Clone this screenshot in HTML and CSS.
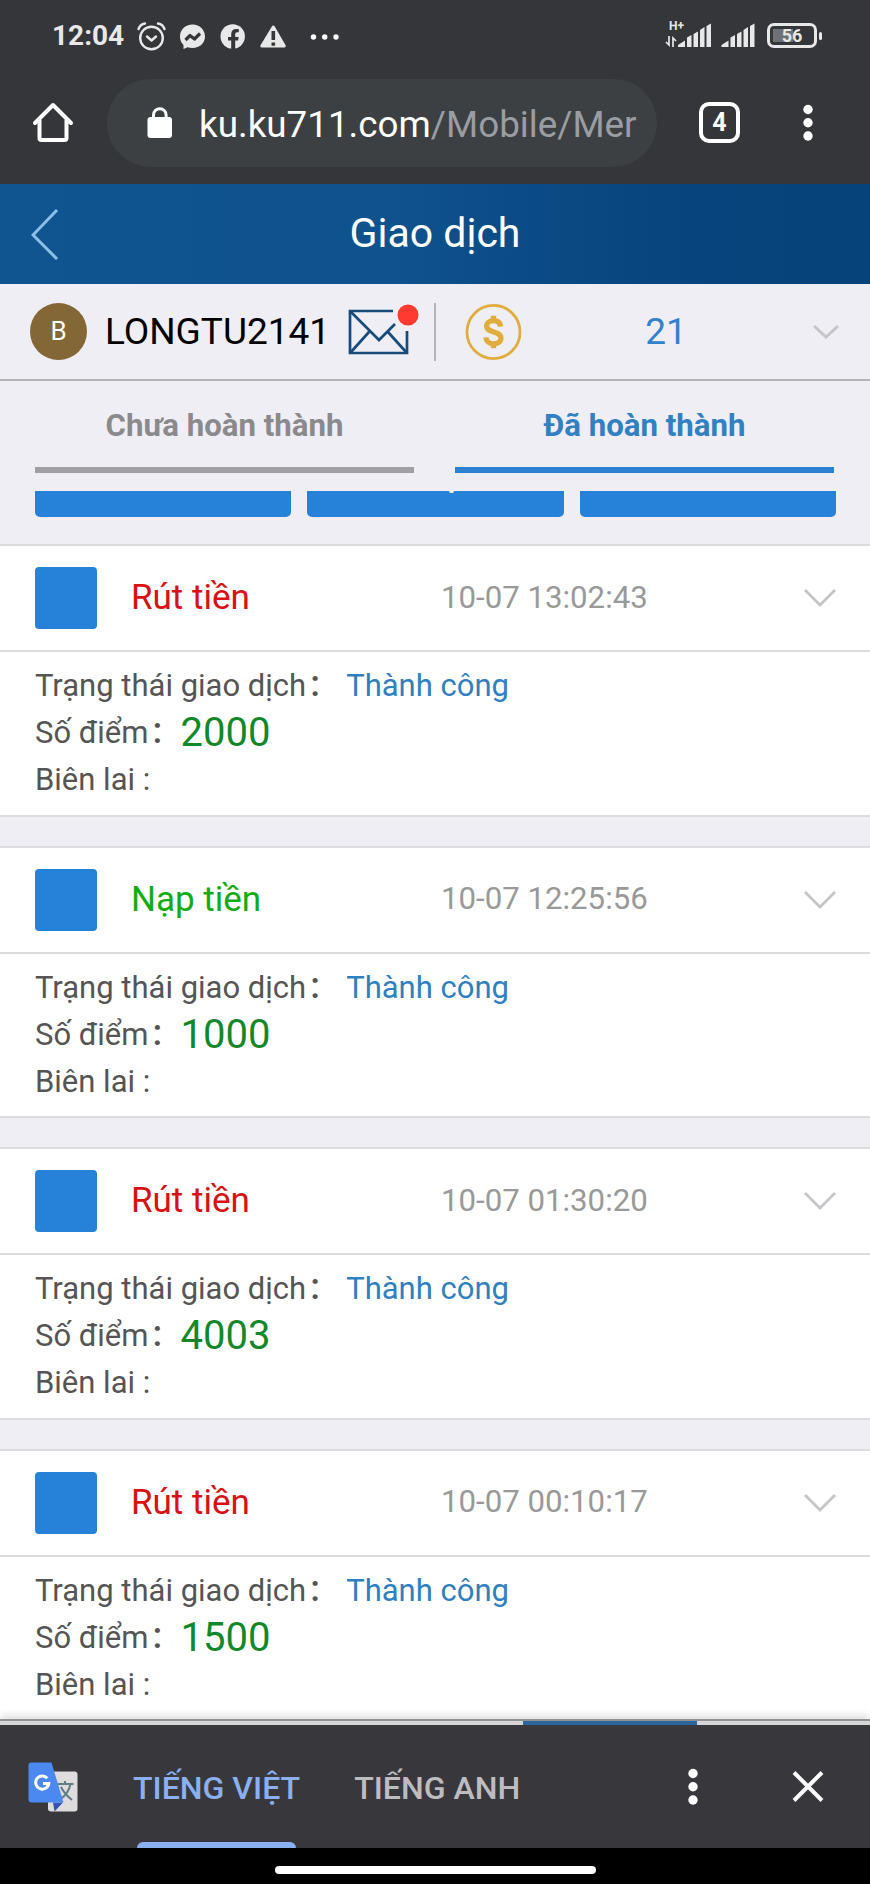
FILE: index.html
```
<!DOCTYPE html>
<html lang="vi">
<head>
  <meta charset="UTF-8">
  <meta name="viewport" content="width=device-width, initial-scale=1.0">
  <title>Giao dịch</title>
  <link rel="stylesheet" href="styles.css">
</head>
<body>
<div class="status-bar">
  <span class="clock">12:04</span>
  <svg class="status-icons" width="206" height="32" viewBox="0 0 206 32">
    <g fill="none" stroke="#e8e8e8" stroke-width="2.4" stroke-linecap="round" stroke-linejoin="round">
      <circle cx="15.500" cy="19" r="11.3"/>
      <path d="M11 17.500l4.500 4 4.500-4M2.500 10C3.500 7 6 5 9 4.500M28.500 10C27.500 7 25 5 22 4.500"/>
    </g>
    <path fill="#e8e8e8" d="M56.500 5.500c-7.300 0-12.500 5.200-12.500 12 0 3.700 1.300 6.300 3.500 8.500V30l4-1.700c1.500.5 3.200.7 5 .7 7.300 0 12.500-5 12.500-11.500s-5.200-12-12.500-12z"/>
    <path fill="none" stroke="#35363a" stroke-width="3.200" stroke-linejoin="round" d="M49.500 21l4.500-4.500 4.500 3.500 5.500-5.500"/>
    <circle cx="96.700" cy="17.500" r="12.200" fill="#e8e8e8"/>
    <path fill="#35363a" d="M95.200 30v-8.500H92V18h3.200v-2.800c0-3.500 2-5.300 5-5.300l2.600.2v3.200h-1.600c-1.500 0-2 .9-2 2V18h3.500l-.6 3.500h-2.900V30z"/>
    <path fill="#e8e8e8" stroke="#e8e8e8" stroke-width="3" stroke-linejoin="round" d="M137.300 8l11 19h-22.500z"/>
    <path fill="none" stroke="#35363a" stroke-width="3.600" d="M137.300 12v9M137.300 23.500v3.200"/>
    <g fill="#fff"><circle cx="177.500" cy="18" r="2.700"/><circle cx="188.700" cy="18" r="2.700"/><circle cx="200" cy="18" r="2.700"/></g>
  </svg>
  <div class="network">
    <span class="network-type">H+</span>
    <svg width="94" height="26" viewBox="0 0 94 26">
      <path fill="none" stroke="#e8e8e8" stroke-width="1.700" d="M4 14v9l-3-3M8 25v-9l3 3"/>
      <g fill="#e8e8e8">
        <path d="M13 25v-2l7-4.500V25zM22 25v-9.500l4.500-2.500v12zM28.500 25V12l4.500-2.500V25zM35 25V8l4.500-3v20zM41.500 25V4l4.500-2.500V25z"/>
        <path d="M56.500 25v-2l7-4.500V25zM65.500 25v-9.500l4.500-2.500v12zM72 25V12l4.500-2.500V25zM78.500 25V8l4.500-3v20zM85 25V4l4.500-2.500V25z"/>
      </g>
    </svg>
  </div>
  <div class="battery"><span class="battery-level"></span><span class="battery-text">56</span></div>
</div>

<div class="browser-bar">
  <svg class="home" width="42" height="42" viewBox="0 0 42 42" fill="none" stroke="#fff" stroke-width="4" stroke-linecap="round" stroke-linejoin="round">
    <path d="M3 21L21 3l18 18M7.500 18v18q0 2 2 2h23q2 0 2-2V18"/>
  </svg>
  <div class="address">
    <svg width="26" height="32" viewBox="0 0 26 32">
      <rect x="0.500" y="10" width="24.500" height="21" rx="3" fill="#fff"/>
      <path fill="none" stroke="#fff" stroke-width="3" d="M6.500 10.500V8a6.300 6.300 0 0 1 12.600 0v2.500"/>
    </svg>
    <span class="url">ku.ku711.com<span class="url-path">/Mobile/Mer</span></span>
  </div>
  <span class="tab-count">4</span>
  <svg class="menu-dots" width="12" height="38" viewBox="0 0 12 38" fill="#fff">
    <circle cx="6" cy="5.500" r="4.700"/><circle cx="6" cy="18.700" r="4.700"/><circle cx="6" cy="32" r="4.700"/>
  </svg>
</div>

<header class="page-header">
  <svg class="back" width="28" height="52" viewBox="0 0 28 52" fill="none" stroke="#8cbfe8" stroke-width="3">
    <path d="M26 2L2 27l24 24"/>
  </svg>
  <h1>Giao dịch</h1>
</header>

<div class="account">
  <span class="avatar">B</span>
  <span class="username">LONGTU2141</span>
  <svg class="mail" width="72" height="52" viewBox="0 0 72 52">
    <g fill="none" stroke="#164b7c" stroke-width="2.700">
      <path d="M46 8H3v42h57V28"/>
      <path d="M4 9l28 28 16-16M4 49l18-20M59 49L41 29"/>
    </g>
    <circle cx="61" cy="12" r="10.500" fill="#ff3a30"/>
  </svg>
  <svg class="coin" width="58" height="58" viewBox="0 0 58 58">
    <circle cx="29" cy="29" r="27" fill="none" stroke="#e0ac3c" stroke-width="2.800"/>
    <path fill="none" stroke="#e0ac3c" stroke-width="5.400" d="M36.200 23.500c-.5-4.500-3.200-6-7.200-6-4.300 0-7 2.300-7 5.500 0 7.500 14.500 4.500 14.500 12 0 4-3.300 6-7.500 6-4.500 0-7.500-2.500-7.700-6.500M29 12.500v5M29 40v5.500"/>
  </svg>
  <span class="points">21</span>
  <svg class="arrow" width="26" height="14" viewBox="0 0 26 14"><path d="M1 1l12 11L25 1"/></svg>
</div>

<nav class="tabs">
  <a class="tab">Chưa hoàn thành</a>
  <a class="tab active">Đã hoàn thành</a>
</nav>
<div class="filters">
  <span class="filter"></span>
  <span class="filter cut"></span>
  <span class="filter"></span>
</div>

<main class="list">
  <section class="card">
    <div class="card-head">
      <span class="square"></span>
      <span class="type withdraw">Rút tiền</span>
      <time>10-07 13:02:43</time>
      <svg class="chevron" width="32" height="18" viewBox="0 0 32 18"><path d="M1 1l15 15L31 1"/></svg>
    </div>
    <div class="card-body">
      <p>Trạng thái giao dịch<span class="colon">:</span><span class="state">Thành công</span></p>
      <p>Số điểm<span class="colon">:</span><span class="amount">2000</span></p>
      <p>Biên lai :</p>
    </div>
  </section>
  <section class="card">
    <div class="card-head">
      <span class="square"></span>
      <span class="type deposit">Nạp tiền</span>
      <time>10-07 12:25:56</time>
      <svg class="chevron" width="32" height="18" viewBox="0 0 32 18"><path d="M1 1l15 15L31 1"/></svg>
    </div>
    <div class="card-body">
      <p>Trạng thái giao dịch<span class="colon">:</span><span class="state">Thành công</span></p>
      <p>Số điểm<span class="colon">:</span><span class="amount">1000</span></p>
      <p>Biên lai :</p>
    </div>
  </section>
  <section class="card">
    <div class="card-head">
      <span class="square"></span>
      <span class="type withdraw">Rút tiền</span>
      <time>10-07 01:30:20</time>
      <svg class="chevron" width="32" height="18" viewBox="0 0 32 18"><path d="M1 1l15 15L31 1"/></svg>
    </div>
    <div class="card-body">
      <p>Trạng thái giao dịch<span class="colon">:</span><span class="state">Thành công</span></p>
      <p>Số điểm<span class="colon">:</span><span class="amount">4003</span></p>
      <p>Biên lai :</p>
    </div>
  </section>
  <section class="card">
    <div class="card-head">
      <span class="square"></span>
      <span class="type withdraw">Rút tiền</span>
      <time>10-07 00:10:17</time>
      <svg class="chevron" width="32" height="18" viewBox="0 0 32 18"><path d="M1 1l15 15L31 1"/></svg>
    </div>
    <div class="card-body">
      <p>Trạng thái giao dịch<span class="colon">:</span><span class="state">Thành công</span></p>
      <p>Số điểm<span class="colon">:</span><span class="amount">1500</span></p>
      <p>Biên lai :</p>
    </div>
  </section>
</main>

<div class="bottom-edge"><span></span></div>
<div class="translate-bar">
  <svg class="translate-icon" width="50" height="50" viewBox="0 0 50 50">
    <rect x="20" y="9.500" width="29.500" height="40" rx="3" fill="#dedcdd"/>
    <path fill="none" stroke="#607d86" stroke-width="2" d="M30 22h15.500M37 19v3M42.500 22c-1.500 7-5.500 12-10 15M33 25c2.500 5 6 9 11 13"/>
    <path fill="#3453b5" d="M25 40.500h10l-8.500 9z"/>
    <path fill="#4b88f0" d="M3.500.5h20L35.500 40.500h-32q-3 0-3-3v-34q0-3 3-3z"/>
    <path fill="none" stroke="#fff" stroke-width="3" d="M19.300 16.300a6.600 6.600 0 1 0 1.500 5.200H15"/>
  </svg>
  <span class="lang active">TIẾNG VIỆT</span>
  <span class="lang">TIẾNG ANH</span>
  <svg class="lang-menu" width="12" height="38" viewBox="0 0 12 38" fill="#fff">
    <circle cx="6" cy="5.500" r="4.700"/><circle cx="6" cy="18.700" r="4.700"/><circle cx="6" cy="32" r="4.700"/>
  </svg>
  <svg class="close" width="32" height="32" viewBox="0 0 32 32" fill="none" stroke="#fff" stroke-width="4"><path d="M2 1.500l28 28M30 1.500l-28 28"/></svg>
</div>
<div class="gesture-bar"><span></span></div>
</body>
</html>
```
FILE: styles.css
```
* {
  box-sizing: border-box;
}
body {
  margin: 0;
  width: 870px;
  height: 1884px;
  overflow: hidden;
  display: flex;
  flex-direction: column;
  font-family: Roboto, "Noto Sans", sans-serif;
  background: #efeef5;
  color: #555;
}
svg {
  display: block;
  flex: none;
}
span, time {
  white-space: nowrap;
}
.status-bar {
  height: 72px;
  flex: none;
  display: flex;
  align-items: center;
  padding: 0 47px 2px 52px;
  background: #35363a;
  color: #e8e8e8;
}
.clock {
  width: 84px;
  font-size: 28px;
  font-weight: 700;
}
.network {
  position: relative;
  margin-left: auto;
}
.network-type {
  position: absolute;
  left: 4px;
  top: -2px;
  font-size: 12px;
  line-height: 12px;
  font-weight: 700;
}
.battery {
  position: relative;
  width: 50px;
  height: 25px;
  margin: 0 6px 0 8px;
  border: 3px solid #e8e8e8;
  border-radius: 7px;
  font-size: 18px;
  font-weight: 700;
  line-height: 20px;
  text-align: center;
}
.battery::after {
  content: "";
  position: absolute;
  right: -8px;
  top: 6px;
  width: 3px;
  height: 8px;
  border-radius: 2px;
  background: #e8e8e8;
}
.battery-level {
  position: absolute;
  left: 3px;
  top: 3px;
  width: 20px;
  height: 13px;
  background: #707174;
}
.battery-text {
  position: relative;
}
.browser-bar {
  height: 112px;
  flex: none;
  display: flex;
  align-items: center;
  padding: 0 56px 11px 32px;
  background: #35363a;
}
.address {
  width: 550px;
  height: 88px;
  margin-left: 33px;
  padding-left: 40px;
  display: flex;
  align-items: center;
  border-radius: 44px;
  background: #3c4043;
}
.url {
  margin-left: 26px;
  padding-top: 3px;
  font-size: 36.8px;
  color: #fff;
}
.url-path {
  color: #9a9da1;
}
.tab-count {
  width: 41px;
  height: 41px;
  margin-left: 42px;
  border: 4px solid #fff;
  border-radius: 10px;
  font-size: 25px;
  font-weight: 700;
  line-height: 34px;
  text-align: center;
  color: #fff;
}
.menu-dots {
  margin-left: auto;
}
.page-header {
  height: 100px;
  flex: none;
  display: grid;
  grid-template-columns: 28px 1fr 28px;
  align-items: center;
  padding: 0 31px;
  background: linear-gradient(to right, #105590, #0f528d 45%, #07437c 80%, #07437b);
}
.page-header h1 {
  margin: 0;
  padding-bottom: 2px;
  text-align: center;
  font-size: 41px;
  font-weight: 400;
  color: #fff;
}
.account {
  height: 97px;
  flex: none;
  display: flex;
  align-items: center;
  padding: 0 31px 0 30px;
  border-bottom: 2px solid #b4b4b8;
}
.avatar {
  width: 57px;
  height: 57px;
  flex: none;
  border-radius: 50%;
  background: #846736;
  color: #fff;
  font-size: 26px;
  line-height: 57px;
  text-align: center;
}
.username {
  width: 242px;
  margin-left: 18px;
  font-size: 37px;
  color: #000;
}
.mail {
  margin-bottom: 6px;
}
.coin {
  width: 88px;
  margin-left: 15px;
  padding-left: 29px;
  border-left: 2px solid #b4b4b8;
}
.points {
  width: 288px;
  text-align: center;
  font-size: 37px;
  color: #3182cc;
}
.arrow {
  margin-left: auto;
}
.arrow path,
.chevron path {
  fill: none;
  stroke: #c4c4c9;
  stroke-width: 2.8;
}
.tabs {
  height: 109px;
  flex: none;
  display: grid;
  grid-template-columns: 1fr 1fr;
  gap: 41px;
  padding: 0 36px 17px 35px;
}
.tab {
  padding-top: 27px;
  border-bottom: 6px solid #a0a0a4;
  font-size: 31.2px;
  line-height: 36px;
  font-weight: 700;
  text-align: center;
  color: #8a8a8c;
}
.tab.active {
  color: #3280c4;
  border-color: #2c82d0;
}
.filters {
  height: 54px;
  flex: none;
  display: grid;
  grid-template-columns: repeat(3, 1fr);
  gap: 16px;
  padding: 1px 34px 0 35px;
}
.filter {
  position: relative;
  height: 26px;
  border-radius: 0 0 5px 5px;
  background: #2681d9;
}
/* tip of the label that scrolled under the tabs */
.filter.cut::before {
  content: "";
  position: absolute;
  left: 142px;
  top: 0;
  width: 5px;
  height: 2px;
  border-radius: 0 0 2px 2px;
  background: #efeef5;
}
.list {
  flex: 1;
  min-height: 0;
  overflow: hidden;
  display: flex;
  flex-direction: column;
  gap: 29px;
}
.card {
  flex: none;
  height: 272.5px;
  border-top: 2px solid #dcdcdf;
  border-bottom: 2px solid #dcdcdf;
  background: #fff;
}
.card-head {
  height: 106px;
  display: flex;
  align-items: center;
  padding: 0 34px 0 35px;
  border-bottom: 2px solid #dcdcdc;
}
.square {
  width: 62px;
  height: 62px;
  border-radius: 4px;
  background: #2681d9;
}
.type {
  width: 310px;
  margin-left: 34px;
  padding-bottom: 1px;
  font-size: 35px;
}
.withdraw {
  color: #d81212;
}
.deposit {
  color: #12ac12;
}
time {
  padding-bottom: 2px;
  font-size: 31.2px;
  color: #999;
}
.chevron {
  margin-left: auto;
}
.card-body {
  padding: 10px 35px 0;
}
.card-body p {
  height: 47px;
  margin: 0;
  font-size: 31px;
  line-height: 47px;
}
.colon {
  display: inline-block;
  width: 31px;
  padding-left: 4px;
  font-size: 37px;
  font-weight: 500;
  line-height: 20px;
}
.state {
  margin-left: 9px;
  color: #2f80c0;
}
.amount {
  display: inline-block;
  margin-left: 1px;
  font-size: 40px;
  line-height: 40px;
  vertical-align: -3px;
  color: #13882a;
}
.bottom-edge {
  position: relative;
  height: 6px;
  flex: none;
  border-top: 2px solid #929294;
  background: #d6d6d8;
  box-shadow: 0 -2px 8px rgba(0, 0, 0, 0.2);
}
.bottom-edge span {
  display: block;
  width: 174px;
  height: 4px;
  margin-left: 523px;
  background: #2c669c;
}
.translate-bar {
  position: relative;
  height: 123px;
  flex: none;
  display: flex;
  align-items: center;
  padding: 0 46px 0 28px;
  background: #38373b;
}
.lang {
  position: relative;
  height: 123px;
  margin-left: 54px;
  font-size: 32.1px;
  font-weight: 500;
  line-height: 127px;
  color: #bdbdc0;
}
.lang.active {
  margin-left: 55px;
  color: #8ab0f0;
}
.lang.active::after {
  content: "";
  position: absolute;
  left: 4px;
  right: 4px;
  bottom: 0;
  height: 6px;
  border-radius: 6px 6px 0 0;
  background: #8ab0f0;
}
.lang-menu {
  margin-left: auto;
}
.close {
  margin-left: 93px;
}
.gesture-bar {
  height: 36px;
  flex: none;
  padding-top: 18px;
  background: #000;
}
.gesture-bar span {
  display: block;
  width: 321px;
  height: 8px;
  margin: 0 auto;
  border-radius: 4px;
  background: #fff;
}
```
